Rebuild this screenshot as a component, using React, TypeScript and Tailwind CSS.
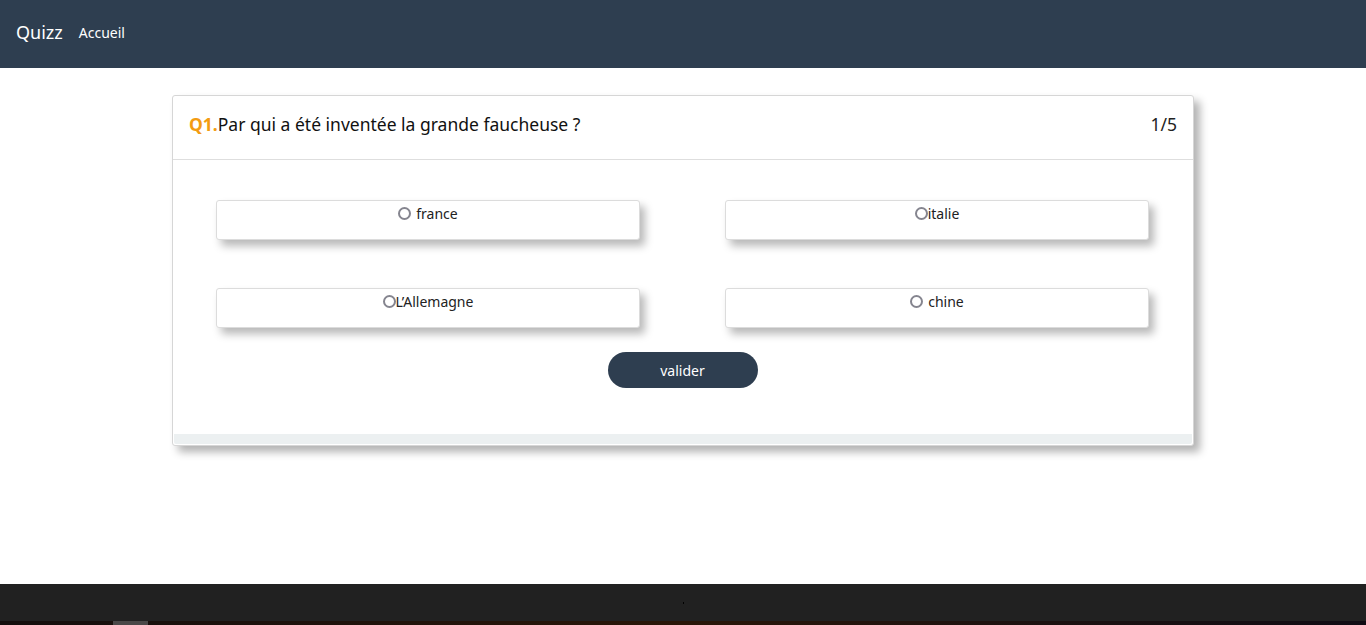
import { useState } from "react";

const OPTIONS = [
  { id: "a", label: "france", gap: true },
  { id: "b", label: "italie", gap: false },
  { id: "c", label: "L’Allemagne", gap: false },
  { id: "d", label: "chine", gap: true },
];

function Option({ label, gap, checked, onPick }: { label: string; gap: boolean; checked: boolean; onPick: () => void }) {
  return (
    <label className="flex h-[40px] cursor-pointer justify-center rounded-[3px] border border-[#dcdcdc] bg-white pt-[2px] text-[14px] text-[#222] shadow-[5px_6px_8px_rgba(0,0,0,0.28)]">
      <span className={`flex h-[20px] items-center ${gap ? "gap-[5px]" : "gap-0"}`}>
        <input
          type="radio"
          name="q1"
          checked={checked}
          onChange={onPick}
          className="m-0 h-[13px] w-[13px] appearance-none rounded-full border-2 border-[#85858f] bg-white checked:border-[4px] checked:border-[#2c3e50]"
        />
        {label}
      </span>
    </label>
  );
}

export default function App() {
  const [picked, setPicked] = useState<string | null>(null);

  return (
    <div className="flex min-h-[625px] flex-col bg-white font-['Noto_Sans','Open_Sans',sans-serif]">
      {/* navbar */}
      <nav className="flex h-[68px] shrink-0 items-center gap-[16px] bg-[#2e3e50] pb-[3px] pl-[16px]">
        <span className="text-[18px] text-white">Quizz</span>
        <span className="text-[14px] text-white">Accueil</span>
      </nav>

      <main className="h-[516px] shrink-0 pt-[27px]">
        <div className="mx-auto w-[1022px] rounded-[3px] border border-[#d6d6d6] bg-white shadow-[6px_6px_8px_rgba(0,0,0,0.3)]">
          <div className="flex h-[64px] items-center justify-between border-b border-[#dedede] pb-[6px] pl-[16px] pr-[16px] text-[17.5px]">
            <p className="text-[#111]">
              <span className="font-bold text-[#f39c12]">Q1.</span>Par qui a été inventée la grande faucheuse ?
            </p>
            <span className="text-[#222]">1/5</span>
          </div>

          <div className="pb-[46px] pl-[43px] pr-[44px] pt-[40px]">
            <div className="grid grid-cols-2 gap-x-[85px] gap-y-[48px]">
              {OPTIONS.map((o) => (
                <Option key={o.id} label={o.label} gap={o.gap} checked={picked === o.id} onPick={() => setPicked(o.id)} />
              ))}
            </div>
            <div className="mt-[24px] flex justify-center">
              <button className="h-[36px] w-[150px] rounded-full bg-[#2e3e50] text-[14px] text-white">valider</button>
            </div>
          </div>

          <div className="mx-[1px] mb-[1px] h-[10px] rounded-b-[2px] bg-[#ecf0f1]" />
        </div>
      </main>

      <footer className="flex h-[37px] shrink-0 items-center justify-center bg-[#212121]">
        <span className="h-[2px] w-[1px] bg-black" />
      </footer>
      <div className="flex h-[4px] shrink-0 bg-gradient-to-r from-[#140e0d] via-[#2a1608] to-[#100c14]">
        <span className="ml-[113px] h-full w-[35px] bg-[#4a4848]" />
      </div>
    </div>
  );
}
